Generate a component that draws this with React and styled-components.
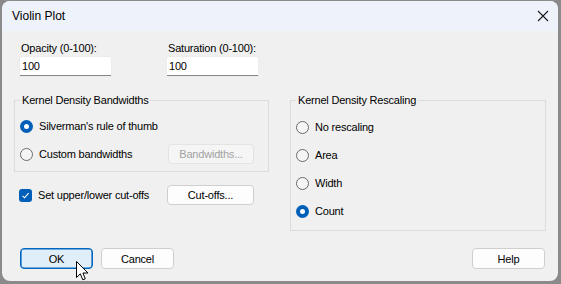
import React from 'react';
import styled, { createGlobalStyle } from 'styled-components';

const GlobalStyle = createGlobalStyle`
  html, body {
    margin: 0;
    padding: 0;
    background: #8a8a8a;
    width: 561px;
    height: 284px;
    overflow: hidden;
  }
  body {
    font-family: "Liberation Sans", Arial, sans-serif;
    font-size: 11px;
    letter-spacing: -0.2px;
    color: #000;
  }
`;

const Dialog = styled.div`
  position: relative;
  margin: 1px 0 0 2px;
  width: 556px;
  height: 280px;
  background: #f0f0f0;
  border-radius: 8px;
  overflow: hidden;
  display: flex;
  flex-direction: column;
`;

const TitleBar = styled.div`
  height: 30px;
  background: #eef2fa;
  display: flex;
  align-items: center;
  justify-content: space-between;
  padding: 0 8px 0 10px;
  font-size: 12px;
  letter-spacing: 0;
`;

const CloseButton = styled.div`
  width: 12px;
  height: 12px;
  display: flex;
  margin-right: 1px;
  margin-bottom: 1px;
`;

const Body = styled.div`
  padding: 0 12px;
  flex: 1;
  display: flex;
  flex-direction: column;
`;

const FieldsRow = styled.div`
  display: flex;
  gap: 56px;
  margin: 10px 0 0 6px;
`;

const Field = styled.div`
  display: flex;
  flex-direction: column;
  gap: 1px;
`;

const Label = styled.label`
  line-height: 15px;
  padding-left: 1px;
`;

const TextInput = styled.div`
  width: 89px;
  height: 18px;
  background: #fff;
  border-bottom: 1px solid #868686;
  box-shadow: 0 0 0 1px #ececec;
  border-radius: 2px 2px 0 0;
  padding-left: 2px;
  line-height: 18px;
`;

const Columns = styled.div`
  display: grid;
  grid-template-columns: 255px 256px;
  column-gap: 21px;
  margin-top: 16px;
  align-items: start;
`;

const Column = styled.div`
  display: flex;
  flex-direction: column;
`;

const Group = styled.fieldset`
  margin: 0;
  border: 1px solid #dcdcdc;
  padding: ${(p) => p.$pad || '4px 5px 3px 5px'};
  min-width: 0;
`;

const Legend = styled.legend`
  padding: 0 2px;
  line-height: 16px;
`;

const OptionRow = styled.div`
  height: 28px;
  display: ${(p) => (p.$withButton ? 'grid' : 'flex')};
  grid-template-columns: 148px auto;
  align-items: center;
`;

const OptionLabel = styled.div`
  display: flex;
  align-items: center;
  gap: 6px;
`;

const Radio = styled.span`
  width: 13px;
  height: 13px;
  box-sizing: border-box;
  border-radius: 50%;
  flex: none;
  ${(p) => (p.$checked
    ? `background: #005fb8; display: flex; align-items: center; justify-content: center;
       &::after { content: ''; width: 5px; height: 5px; border-radius: 50%; background: #fff; }`
    : 'border: 1px solid #6b6b6b; background: #f5f5f5;')}
`;

const Checkbox = styled.span`
  width: 13px;
  height: 13px;
  border-radius: 3px;
  background: #005fb8;
  display: flex;
  align-items: center;
  justify-content: center;
  flex: none;
`;

const CheckRow = styled.div`
  display: grid;
  grid-template-columns: 148px auto;
  align-items: center;
  margin: 13px 0 0 5px;
  height: 20px;
`;

const Button = styled.div`
  box-sizing: border-box;
  width: ${(p) => p.$width || 73}px;
  height: ${(p) => p.$height || 21}px;
  border-radius: 4px;
  display: flex;
  align-items: center;
  justify-content: center;
  border: 1px solid ${(p) => (p.$disabled ? '#e3e3e3' : '#cfcfcf')};
  background: ${(p) => (p.$disabled ? '#f5f5f5' : '#fdfdfd')};
  color: ${(p) => (p.$disabled ? '#a2a2a2' : '#000')};
  ${(p) => p.$focused && `
    border: 1px solid #0067c0;
    box-shadow: inset 0 0 0 0.6px #0067c0;
    background: #e0eef9;
  `}
`;

const Footer = styled.div`
  position: relative;
  display: flex;
  align-items: center;
  gap: 8px;
  margin: 17px 1px 0 6px;
`;

const Spacer = styled.div`
  flex: 1;
`;

const Cursor = styled.svg`
  position: absolute;
  left: 56px;
  top: 13px;
`;

function RadioOption({ checked, children }) {
  return (
    <OptionLabel>
      <Radio $checked={checked} />
      <span>{children}</span>
    </OptionLabel>
  );
}

function App() {
  return (
    <>
      <GlobalStyle />
      <Dialog>
        <TitleBar>
          <span>Violin Plot</span>
          <CloseButton>
            <svg width="12" height="12" viewBox="0 0 12 12">
              <path d="M1 1 L11 11 M11 1 L1 11" stroke="#1a1a1a" strokeWidth="1.1" />
            </svg>
          </CloseButton>
        </TitleBar>
        <Body>
          <FieldsRow>
            <Field>
              <Label>Opacity (0-100):</Label>
              <TextInput>100</TextInput>
            </Field>
            <Field>
              <Label>Saturation (0-100):</Label>
              <TextInput>100</TextInput>
            </Field>
          </FieldsRow>
          <Columns>
            <Column>
              <Group>
                <Legend>Kernel Density Bandwidths</Legend>
                <OptionRow>
                  <RadioOption checked>Silverman&apos;s rule of thumb</RadioOption>
                </OptionRow>
                <OptionRow $withButton>
                  <RadioOption>Custom bandwidths</RadioOption>
                  <Button $disabled $width={86} $height={20}>Bandwidths...</Button>
                </OptionRow>
              </Group>
              <CheckRow>
                <OptionLabel>
                  <Checkbox>
                    <svg width="9" height="9" viewBox="0 0 9 9">
                      <path d="M1.5 4.8 L3.6 6.8 L7.6 2.2" stroke="#fff" strokeWidth="1.1" fill="none" />
                    </svg>
                  </Checkbox>
                  <span>Set upper/lower cut-offs</span>
                </OptionLabel>
                <Button $width={87} $height={20}>Cut-offs...</Button>
              </CheckRow>
            </Column>
            <Column>
              <Group $pad="5px 5px 5px 5px">
                <Legend>Kernel Density Rescaling</Legend>
                <OptionRow><RadioOption>No rescaling</RadioOption></OptionRow>
                <OptionRow><RadioOption>Area</RadioOption></OptionRow>
                <OptionRow><RadioOption>Width</RadioOption></OptionRow>
                <OptionRow><RadioOption checked>Count</RadioOption></OptionRow>
              </Group>
            </Column>
          </Columns>
          <Footer>
            <Button $focused>OK</Button>
            <Button>Cancel</Button>
            <Spacer />
            <Button>Help</Button>
            <Cursor width="13" height="20" viewBox="0 0 13 20">
              <path d="M0.5 0.5 L0.5 16.5 L4.3 12.8 L6.8 18.8 L9.3 17.8 L6.9 12 L12 12 Z" fill="#fff" stroke="#000" strokeWidth="1" strokeLinejoin="round" />
            </Cursor>
          </Footer>
        </Body>
      </Dialog>
    </>
  );
}

export default App;
